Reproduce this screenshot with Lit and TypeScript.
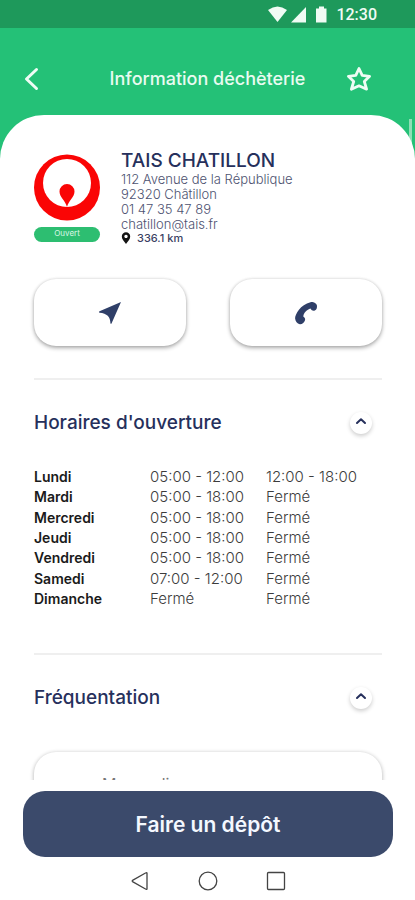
import { LitElement, html, css, svg } from "lit";
import { customElement, state } from "lit/decorators.js";

const HOURS: [string, string, string][] = [
  ["Lundi", "05:00 - 12:00", "12:00 - 18:00"],
  ["Mardi", "05:00 - 18:00", "Fermé"],
  ["Mercredi", "05:00 - 18:00", "Fermé"],
  ["Jeudi", "05:00 - 18:00", "Fermé"],
  ["Vendredi", "05:00 - 18:00", "Fermé"],
  ["Samedi", "07:00 - 12:00", "Fermé"],
  ["Dimanche", "Fermé", "Fermé"],
];

const chevronUp = html`<svg width="12" height="8" viewBox="0 0 12 8" aria-hidden="true">
  ${svg`<path d="M2 6 L6 2.2 L10 6" fill="none" stroke="#26305c" stroke-width="2" stroke-linecap="round" stroke-linejoin="round"/>`}
</svg>`;

@customElement("app-root")
export class AppRoot extends LitElement {
  @state() private showHours = true;
  @state() private showTraffic = true;

  static styles = css`
    :host {
      display: flex;
      flex-direction: column;
      height: 100vh;
      overflow: hidden;
      background: #fff;
      color: #26305c;
      font-family: Inter, "Noto Sans", sans-serif;
    }
    * {
      box-sizing: border-box;
    }
    button {
      font-family: inherit;
      border: 0;
      padding: 0;
      background: none;
      display: flex;
      align-items: center;
      justify-content: center;
      cursor: pointer;
    }
    svg {
      display: block;
    }
    .status {
      flex: none;
      height: 28px;
      padding: 2px 38px 0 0;
      display: flex;
      align-items: center;
      justify-content: flex-end;
      background: #1e995b;
      color: #f0fbf4;
      font: 500 16px/20px Roboto, sans-serif;
    }
    .status svg {
      margin-right: 8px;
    }
    .bar {
      flex: none;
      height: 87px;
      padding: 14px 42px 0 18px;
      display: grid;
      grid-template-columns: 52px 1fr 28px;
      align-items: center;
      background: #24c177;
    }
    .back {
      justify-self: start;
      width: 28px;
    }
    .bar h1 {
      margin: 0;
      text-align: center;
      color: #e9fbf1;
      font-size: 18px;
      line-height: 24px;
      font-weight: 500;
    }
    .scroll {
      flex: 1;
      min-height: 0;
      position: relative;
      overflow: hidden;
      background: linear-gradient(#24c177 60px, #fff 60px);
    }
    .thumb {
      position: absolute;
      top: 4px;
      right: 3px;
      width: 3px;
      height: 28px;
      background: #8fdfb6;
    }
    .sheet {
      position: relative;
      padding: 34px 33px 0 34px;
      min-height: 100%;
      background: #fff;
      border-radius: 44px 44px 0 0;
    }
    .place {
      display: flex;
      gap: 21px;
    }
    .brand {
      padding-top: 5px;
    }
    .badge {
      margin-top: 6px;
      height: 15px;
      border-radius: 8px;
      background: #2dbe71;
      color: #d9f7e6;
      font-size: 8px;
      line-height: 13px;
      text-align: center;
    }
    .name {
      margin: 0;
      font-size: 19px;
      line-height: 23px;
      font-weight: 500;
    }
    address {
      font-style: normal;
      font-size: 13px;
      line-height: 15px;
      font-weight: 300;
      color: #4d5270;
    }
    address a {
      color: inherit;
      text-decoration: none;
    }
    .line {
      display: block;
    }
    .distance {
      display: flex;
      align-items: center;
      gap: 6px;
      font-size: 11px;
      line-height: 12px;
      font-weight: 500;
      color: #3b4163;
    }
    .actions {
      margin-top: 35px;
      display: grid;
      grid-template-columns: 1fr 1fr;
      gap: 44px;
    }
    .action {
      height: 67px;
      border-radius: 22px;
      background: #fff;
      box-shadow: 0 2px 4px rgba(0, 0, 0, 0.32), 0 0 3px rgba(0, 0, 0, 0.12);
    }
    .rule {
      height: 2px;
      margin: 32px 0 0;
      border: 0;
      background: #efefef;
    }
    .section {
      display: flex;
      align-items: center;
      justify-content: space-between;
      padding: 31px 10px 0 0;
    }
    .section h2 {
      margin: 0;
      font-size: 19px;
      line-height: 24px;
      font-weight: 500;
    }
    .toggle {
      width: 22px;
      height: 22px;
      padding-bottom: 4px;
      border-radius: 50%;
      background: #fff;
      box-shadow: 0 2px 4px rgba(0, 0, 0, 0.2);
    }
    table {
      width: 100%;
      height: 142px;
      margin: 32px 0 44px;
      border-collapse: collapse;
      table-layout: fixed;
      font-size: 15px;
      line-height: 18px;
    }
    table + .rule {
      margin-top: 0;
    }
    th,
    td {
      padding: 0;
      text-align: left;
      font-weight: 300;
      color: #3c3c3c;
      white-space: nowrap;
    }
    th {
      font-size: 14px;
      font-weight: 600;
      color: #1a1a1a;
    }
    .card {
      margin-top: 42px;
      height: 220px;
      padding: 22px 68px;
      border-radius: 22px;
      background: #fff;
      box-shadow: 0 1px 4px rgba(0, 0, 0, 0.32);
      font-size: 16px;
      line-height: 20px;
      color: #777;
    }
    .foot {
      flex: none;
      padding: 11px 22px 8px 23px;
      background: #fff;
    }
    .deposit {
      width: 100%;
      height: 66px;
      border-radius: 22px;
      background: #3b4a6b;
      color: #f4f8ff;
      font-size: 21px;
      font-weight: 600;
    }
    .nav {
      margin-top: 13px;
      height: 22px;
      display: flex;
      justify-content: center;
      gap: 48px;
    }
  `;

  render() {
    return html`
      <div class="status">
        <svg width="61" height="18" viewBox="0 0 61 18" fill="#f0fbf4" aria-hidden="true">
          <path d="M1 4 Q10.500 -3 20 4 L10.500 16 Z" />
          <path d="M24 16.500 L39 1 V16.500 Z" />
          <path d="M52 0.500 h5 v2 h2.500 v14 h-10.500 v-14 h3 Z" />
        </svg>
        <span>12:30</span>
      </div>
      <header class="bar">
        <button class="back" aria-label="Retour">
          <svg width="16" height="24" viewBox="0 0 16 24" aria-hidden="true">
            <path d="M12.500 2.500 L2.500 12 L12.500 21.500" fill="none" stroke="#effcf5" stroke-width="3" stroke-linecap="round" stroke-linejoin="round" />
          </svg>
        </button>
        <h1>Information déchèterie</h1>
        <button aria-label="Ajouter aux favoris">
          <svg width="28" height="28" viewBox="0 0 28 28" aria-hidden="true">
            <path d="M14 3.500 L17.200 10.300 L24.600 11.300 L19.300 16.500 L21.600 24.200 L14 20.800 L6.400 24.200 L8.700 16.500 L3.400 11.300 L10.800 10.300 Z" fill="none" stroke="#effcf5" stroke-width="2.800" stroke-linejoin="round" />
          </svg>
        </button>
      </header>

      <main class="scroll">
        <div class="thumb"></div>
        <div class="sheet">
          <div class="place">
            <div class="brand">
              <svg width="66" height="67" viewBox="0 0 66 67" role="img" aria-label="Logo">
                <circle cx="33" cy="33.500" r="33" fill="#fa0505" />
                <circle cx="33" cy="29" r="24" fill="#fff" />
                <path d="M33 53 C31.500 46.500 25.500 43.500 25.500 37.500 A7.500 7.500 0 0 1 40.500 37.500 C40.500 43.500 34.500 46.500 33 53 Z" fill="#fa0505" />
              </svg>
              <div class="badge">Ouvert</div>
            </div>
            <div>
              <h2 class="name">TAIS CHATILLON</h2>
              <address>
                <span class="line">112 Avenue de la République</span>
                <span class="line">92320 Châtillon</span>
                <a class="line" href="tel:0147354789">01 47 35 47 89</a>
                <a class="line" href="mailto:chatillon@tais.fr">chatillon@tais.fr</a>
              </address>
              <div class="distance">
                <svg width="10" height="12" viewBox="0 0 10 12" aria-hidden="true">
                  <path d="M5 12 C3 9 0.800 7.200 0.800 4.400 A4.200 4.200 0 0 1 9.200 4.400 C9.200 7.200 7 9 5 12 Z M5 2.700 a1.700 1.700 0 1 0 0.010 0 Z" fill="#141414" fill-rule="evenodd" />
                </svg>
                <span>336.1 km</span>
              </div>
            </div>
          </div>

          <div class="actions">
            <button class="action" aria-label="Itinéraire">
              <svg width="24" height="24" viewBox="0 0 24 24" aria-hidden="true">
                <path d="M23 1 L13.500 22.500 Q12.800 23.500 12.400 22 C12.400 16 9 12.300 1.500 11.700 Q0.300 11 1.500 10.300 Z" fill="#2f3f68" />
              </svg>
            </button>
            <button class="action" aria-label="Appeler">
              <svg width="24" height="24" viewBox="0 0 24 24" aria-hidden="true">
                <path d="M16.500 1.200 C18.500 0.400 22.600 2.200 22.900 4.300 C23.300 7 22.700 8.700 20.800 9.600 C19 10.400 17.500 9.300 16.500 7.600 C13 8.800 9.700 11.800 9.300 15.400 C11 16.400 11.700 18.200 10.700 20 C9.700 21.900 8.200 23.400 5.800 23.200 C3.200 23 1.400 20.500 1.100 17.600 C0.800 13.500 6.500 3.500 16.500 1.200 Z" fill="#2f3f68" />
              </svg>
            </button>
          </div>

          <hr class="rule" />
          <div class="section">
            <h2 id="hours">Horaires d'ouverture</h2>
            <button
              class="toggle"
              aria-labelledby="hours"
              aria-expanded=${this.showHours}
              @click=${() => (this.showHours = !this.showHours)}
            >
              ${chevronUp}
            </button>
          </div>
          ${this.showHours
            ? html`<table aria-labelledby="hours">
                <tbody>
                  ${HOURS.map(
                    ([day, morning, afternoon]) =>
                      html`<tr><th scope="row">${day}</th><td>${morning}</td><td>${afternoon}</td></tr>`
                  )}
                </tbody>
              </table>`
            : ""}

          <hr class="rule" />
          <div class="section">
            <h2 id="traffic">Fréquentation</h2>
            <button
              class="toggle"
              aria-labelledby="traffic"
              aria-expanded=${this.showTraffic}
              @click=${() => (this.showTraffic = !this.showTraffic)}
            >
              ${chevronUp}
            </button>
          </div>
          ${this.showTraffic ? html`<div class="card">Mercredi</div>` : ""}
        </div>
      </main>

      <footer class="foot">
        <button class="deposit">Faire un dépôt</button>
        <nav class="nav" aria-label="Système">
          <button aria-label="Précédent">
            <svg width="20" height="20" viewBox="0 0 20 20" fill="none" stroke="#444" stroke-width="1.300" stroke-linejoin="round">
              <path d="M17 2 V18 Q16.500 18.600 15.500 18 L2.500 10.600 Q1.800 10 2.500 9.400 L15.500 2 Q16.500 1.400 17 2 Z" />
            </svg>
          </button>
          <button aria-label="Accueil">
            <svg width="20" height="20" viewBox="0 0 20 20" fill="none" stroke="#444" stroke-width="1.300">
              <circle cx="10" cy="10" r="8.800" />
            </svg>
          </button>
          <button aria-label="Applications récentes">
            <svg width="20" height="20" viewBox="0 0 20 20" fill="none" stroke="#444" stroke-width="1.300">
              <rect x="1.500" y="1.500" width="17" height="17" rx="1" />
            </svg>
          </button>
        </nav>
      </footer>
    `;
  }
}
